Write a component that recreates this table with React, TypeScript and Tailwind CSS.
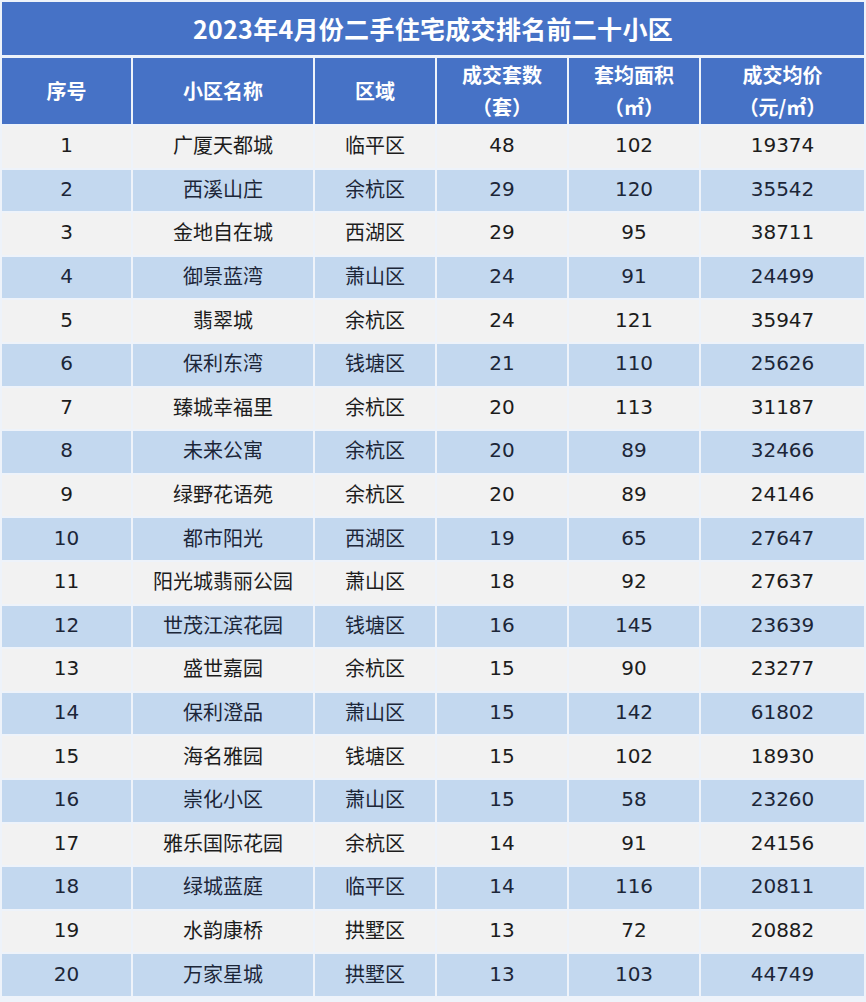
import React from "react";

const rows: [number, string, string, number, number, number][] = [
  [1, "广厦天都城", "临平区", 48, 102, 19374],
  [2, "西溪山庄", "余杭区", 29, 120, 35542],
  [3, "金地自在城", "西湖区", 29, 95, 38711],
  [4, "御景蓝湾", "萧山区", 24, 91, 24499],
  [5, "翡翠城", "余杭区", 24, 121, 35947],
  [6, "保利东湾", "钱塘区", 21, 110, 25626],
  [7, "臻城幸福里", "余杭区", 20, 113, 31187],
  [8, "未来公寓", "余杭区", 20, 89, 32466],
  [9, "绿野花语苑", "余杭区", 20, 89, 24146],
  [10, "都市阳光", "西湖区", 19, 65, 27647],
  [11, "阳光城翡丽公园", "萧山区", 18, 92, 27637],
  [12, "世茂江滨花园", "钱塘区", 16, 145, 23639],
  [13, "盛世嘉园", "余杭区", 15, 90, 23277],
  [14, "保利澄品", "萧山区", 15, 142, 61802],
  [15, "海名雅园", "钱塘区", 15, 102, 18930],
  [16, "崇化小区", "萧山区", 15, 58, 23260],
  [17, "雅乐国际花园", "余杭区", 14, 91, 24156],
  [18, "绿城蓝庭", "临平区", 14, 116, 20811],
  [19, "水韵康桥", "拱墅区", 13, 72, 20882],
  [20, "万家星城", "拱墅区", 13, 103, 44749],
];

const cjk = "font-['Noto_Sans_CJK_SC','Noto_Sans',sans-serif]";
const num = "font-['DejaVu_Sans','Noto_Sans_CJK_SC',sans-serif]";

export default function App() {
  return (
    <div className={`w-[866px] h-[1002px] bg-[#eef3fa] p-[2px] ${cjk}`}>
      <div className="h-[53px] bg-[#4672c6] flex items-center justify-center text-white font-bold text-[25px] tracking-[0.3px]">
        2023年4月份二手住宅成交排名前二十小区
      </div>
      <div className="mt-[3px] grid grid-cols-[129px_180px_120px_130px_130px_163px] gap-x-[2px] gap-y-[2px]">
        <div className="h-[66px] bg-[#4672c6] flex items-center justify-center text-white font-bold text-[20px]">序号</div>
        <div className="h-[66px] bg-[#4672c6] flex items-center justify-center text-white font-bold text-[20px]">小区名称</div>
        <div className="h-[66px] bg-[#4672c6] flex items-center justify-center text-white font-bold text-[20px]">区域</div>
        <div className="h-[66px] bg-[#4672c6] flex flex-col items-center justify-center text-white font-bold text-[20px] leading-[32px]">
          <span>成交套数</span>
          <span>（套）</span>
        </div>
        <div className="h-[66px] bg-[#4672c6] flex flex-col items-center justify-center text-white font-bold text-[20px] leading-[32px]">
          <span>套均面积</span>
          <span>（㎡）</span>
        </div>
        <div className="h-[66px] bg-[#4672c6] flex flex-col items-center justify-center text-white font-bold text-[20px] leading-[32px]">
          <span>成交均价</span>
          <span>（元/㎡）</span>
        </div>
        {rows.map((r, i) => {
          const bg = i % 2 === 0 ? "bg-[#f2f2f2]" : "bg-[#c3d8ef]";
          const color = i % 2 === 0 ? "text-[#1c1c1c]" : "text-[#1c2638]";
          const cell = `h-[41.6px] pb-[3px] ${bg} ${color} flex items-center justify-center text-[20px]`;
          return (
            <React.Fragment key={r[0]}>
              <div className={`${cell} ${num} text-[19px]`}>{r[0]}</div>
              <div className={cell}>{r[1]}</div>
              <div className={cell}>{r[2]}</div>
              <div className={`${cell} ${num} text-[19px]`}>{r[3]}</div>
              <div className={`${cell} ${num} text-[19px]`}>{r[4]}</div>
              <div className={`${cell} ${num} text-[19px]`}>{r[5]}</div>
            </React.Fragment>
          );
        })}
      </div>
    </div>
  );
}
